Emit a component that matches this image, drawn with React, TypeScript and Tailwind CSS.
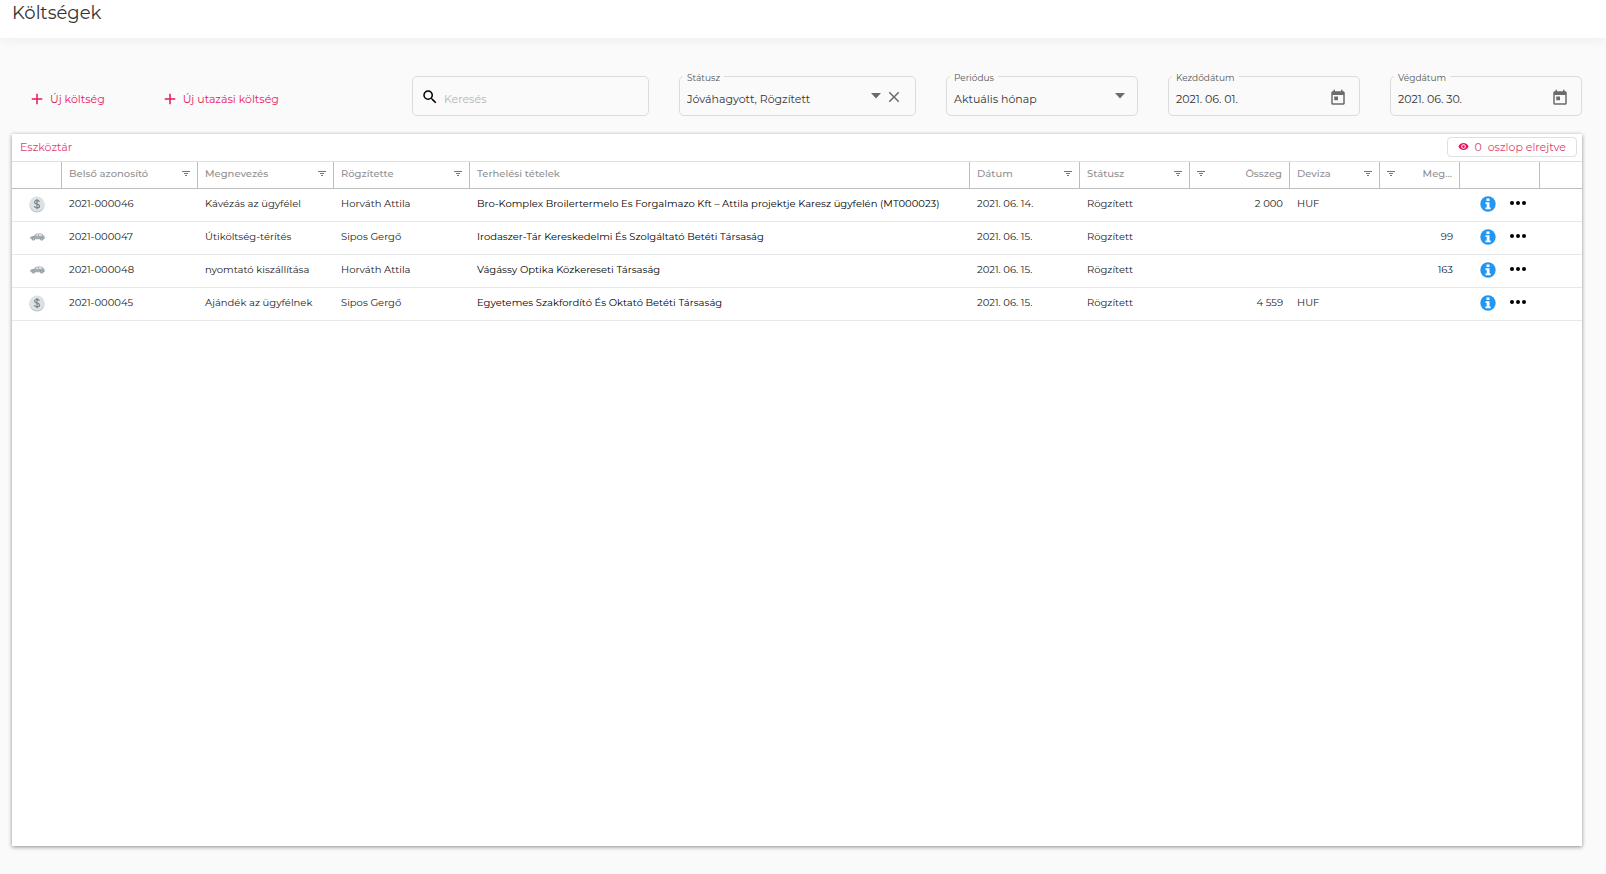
import { ReactNode } from "react";
import { MdAdd, MdClose, MdRemoveRedEye, MdSearch, MdToday } from "react-icons/md";

interface Expense {
  id: string;
  kind: "cash" | "travel";
  name: string;
  recordedBy: string;
  chargedTo: string;
  date: string;
  status: string;
  amount: string;
  currency: string;
  distance: string;
}

const expenses: Expense[] = [
  {
    id: "2021-000046",
    kind: "cash",
    name: "Kávézás az ügyfélel",
    recordedBy: "Horváth Attila",
    chargedTo: "Bro-Komplex Broilertermelo Es Forgalmazo Kft – Attila projektje Karesz ügyfelén (MT000023)",
    date: "2021. 06. 14.",
    status: "Rögzített",
    amount: "2 000",
    currency: "HUF",
    distance: "",
  },
  {
    id: "2021-000047",
    kind: "travel",
    name: "Útiköltség-térítés",
    recordedBy: "Sipos Gergő",
    chargedTo: "Irodaszer-Tár Kereskedelmi És Szolgáltató Betéti Társaság",
    date: "2021. 06. 15.",
    status: "Rögzített",
    amount: "",
    currency: "",
    distance: "99",
  },
  {
    id: "2021-000048",
    kind: "travel",
    name: "nyomtató kiszállítása",
    recordedBy: "Horváth Attila",
    chargedTo: "Vágássy Optika Közkereseti Társaság",
    date: "2021. 06. 15.",
    status: "Rögzített",
    amount: "",
    currency: "",
    distance: "163",
  },
  {
    id: "2021-000045",
    kind: "cash",
    name: "Ajándék az ügyfélnek",
    recordedBy: "Sipos Gergő",
    chargedTo: "Egyetemes Szakfordító És Oktató Betéti Társaság",
    date: "2021. 06. 15.",
    status: "Rögzített",
    amount: "4 559",
    currency: "HUF",
    distance: "",
  },
];

const FilterIcon = () => (
  <svg width="8" height="6" viewBox="0 0 8 6" fill="#757575" shapeRendering="crispEdges" aria-hidden="true">
    <rect x="0" y="0" width="8" height="1" />
    <rect x="2" y="2" width="4" height="1" />
    <rect x="3" y="4" width="2" height="1" />
  </svg>
);

const ArrowIcon = () => (
  <svg width="10" height="6" viewBox="0 0 10 6" fill="#6b6b6b" className="pointer-events-none shrink-0" aria-hidden="true">
    <path d="M0 0h10L5 5.500z" />
  </svg>
);

const InfoIcon = () => (
  <svg width="16" height="16" viewBox="0 0 16 16" aria-hidden="true">
    <circle cx="8" cy="8" r="7.700" fill="#2196f3" />
    <path d="M6.500 2.500h3v2.500h-3zM5.500 6.300h4v5.200h1.200v1.700H5.400v-1.700h1.300V8H5.500z" fill="#fff" />
  </svg>
);

const CoinIcon = () => (
  <svg width="16" height="17" viewBox="0 0 16 17" aria-hidden="true">
    <circle cx="8" cy="9" r="7.6" fill="#b9c1c5" />
    <circle cx="8" cy="8" r="7.6" fill="#dbe2e5" />
    <path
      d="M10.4 5.9C10.1 4.9 9.2 4.400 8 4.400c-1.400 0-2.400.7-2.400 1.800 0 2.500 5 1.200 5 3.800 0 1.200-1.100 1.900-2.600 1.900-1.400 0-2.400-.6-2.700-1.700M8 3v10.300"
      fill="none"
      stroke="#7b8489"
      strokeWidth="1.2"
    />
  </svg>
);

const CarIcon = () => (
  <svg width="15" height="8" viewBox="0 0 15 8" aria-hidden="true">
    <path
      d="M.3 5.800V4.200C.6 3.300 2 2.900 4 2.700 5.200 1.300 6.300.5 7.600.5h3.200c1.200 0 2 .8 2.800 2 .8.3 1.100 1 1.100 1.900v1.300l-1 .5H1z"
      fill="#a3acb1"
    />
    <path d="M5.300 2.700 7.300 1.300h.8v1.400zM8.900 1.300h1.700c.7 0 1.200.6 1.700 1.400H8.900z" fill="#eceff1" />
    <circle cx="3.400" cy="5.900" r="1.600" fill="#8b9499" />
    <circle cx="11.700" cy="5.900" r="1.600" fill="#8b9499" />
    <circle cx="3.400" cy="5.900" r=".7" fill="#dde1e3" />
    <circle cx="11.700" cy="5.900" r=".7" fill="#dde1e3" />
  </svg>
);

const DotsIcon = () => (
  <svg width="16" height="4" viewBox="0 0 16 4" fill="#000" aria-hidden="true">
    <circle cx="2" cy="2" r="2" />
    <circle cx="8" cy="2" r="2" />
    <circle cx="14" cy="2" r="2" />
  </svg>
);

interface FieldProps {
  id: string;
  label: string;
  children: ReactNode;
}

// Outlined field, the label sits on the top border
const Field = ({ id, label, children }: FieldProps) => (
  <div className="relative flex h-10 min-w-0 items-center rounded-[5px] border border-[#dcdcdc] pr-3 pl-[7px]">
    <label htmlFor={id} className="absolute -top-[5px] left-[3px] bg-[#fafafa] px-1 text-[9px] leading-3 text-[#555]">
      {label}
    </label>
    {children}
  </div>
);

interface HeadProps {
  title: string;
  filter?: boolean;
  right?: boolean;
}

const Head = ({ title, filter = true, right = false }: HeadProps) => (
  <th className="border-r border-b border-[#bdbdbd] px-[7px] font-medium">
    <div className={`flex items-center justify-between ${right ? "flex-row-reverse" : ""}`}>
      <span className="truncate">{title}</span>
      {filter && (
        <button type="button" aria-label={`${title} szűrése`} className="shrink-0">
          <FilterIcon />
        </button>
      )}
    </div>
  </th>
);

const App = () => {
  return (
    <div className="flex min-h-screen flex-col bg-[#fafafa] font-[Montserrat,Inter,sans-serif] text-[11px] leading-4 text-[#333]">
      <header className="h-[38px] bg-white pl-3 shadow-[0_2px_10px_rgba(0,0,0,0.05)]">
        <h1 className="text-[18px] leading-[26px] text-[#333]">Költségek</h1>
      </header>

      <main className="flex grow flex-col pt-[38px] pr-6 pb-7 pl-3">
        <div className="mb-[18px] grid grid-cols-[370fr_237fr_237fr_192fr_192fr_192fr] gap-[30px]">
          <div className="flex min-w-0 items-center gap-14 pt-[6px] pl-4 text-[#e6195a]">
            <button type="button" className="flex items-center gap-1">
              <MdAdd size={18} />
              Új költség
            </button>
            <button type="button" className="flex items-center gap-1">
              <MdAdd size={18} />
              Új utazási költség
            </button>
          </div>

          <div className="flex h-10 min-w-0 items-center gap-[5px] rounded-[5px] border border-[#dcdcdc] px-2 pt-[2px]">
            <MdSearch size={18} className="shrink-0 text-black" />
            <input
              type="search"
              aria-label="Keresés"
              placeholder="Keresés"
              className="w-full min-w-0 bg-transparent pt-1 outline-none placeholder:text-[#b5b5b5]"
            />
          </div>

          <Field id="status" label="Státusz">
            <select id="status" className="min-w-0 grow appearance-none bg-transparent pt-[6px] outline-none">
              <option>Jóváhagyott, Rögzített</option>
            </select>
            <ArrowIcon />
            <button type="button" aria-label="Törlés" className="ml-1 shrink-0 pt-[2px] text-[#6b6b6b]">
              <MdClose size={18} />
            </button>
          </Field>

          <Field id="period" label="Periódus">
            <select id="period" className="min-w-0 grow appearance-none bg-transparent pt-[6px] outline-none">
              <option>Aktuális hónap</option>
            </select>
            <ArrowIcon />
          </Field>

          <Field id="from" label="Kezdődátum">
            <input id="from" type="text" defaultValue="2021. 06. 01." className="min-w-0 grow bg-transparent pt-[6px] outline-none" />
            <button type="button" aria-label="Kezdődátum választása" className="shrink-0 pt-1 text-[#6b6b6b]">
              <MdToday size={18} />
            </button>
          </Field>

          <Field id="to" label="Végdátum">
            <input id="to" type="text" defaultValue="2021. 06. 30." className="min-w-0 grow bg-transparent pt-[6px] outline-none" />
            <button type="button" aria-label="Végdátum választása" className="shrink-0 pt-1 text-[#6b6b6b]">
              <MdToday size={18} />
            </button>
          </Field>
        </div>

        <section className="grow bg-white shadow-[0_1px_4px_rgba(0,0,0,0.45)]">
          <div className="flex h-7 items-center justify-between border-b border-[#e0e0e0] pr-[5px] pb-[2px] pl-2 text-[#e04069]">
            <button type="button">Eszköztár</button>
            <button type="button" className="flex h-5 items-center gap-[6px] rounded border border-[#e0e0e0] px-[10px]">
              <MdRemoveRedEye size={11} className="text-[#e6195a]" />
              <span>0&nbsp; oszlop elrejtve</span>
            </button>
          </div>

          <table className="w-full table-fixed border-separate border-spacing-0 text-left text-[10px]">
            <colgroup>
              <col className="w-[50px]" />
              <col className="w-[136px]" />
              <col className="w-[136px]" />
              <col className="w-[136px]" />
              <col className="w-[500px]" />
              <col className="w-[110px]" />
              <col className="w-[110px]" />
              <col className="w-[100px]" />
              <col className="w-[90px]" />
              <col className="w-[80px]" />
              <col className="w-[80px]" />
              <col />
            </colgroup>
            <thead>
              <tr className="h-[27px] text-[#919191] *:pb-[2px]">
                <th className="border-r border-b border-[#bdbdbd]" />
                <Head title="Belső azonosító" />
                <Head title="Megnevezés" />
                <Head title="Rögzítette" />
                <Head title="Terhelési tételek" filter={false} />
                <Head title="Dátum" />
                <Head title="Státusz" />
                <Head title="Összeg" right />
                <Head title="Deviza" />
                <Head title="Meg..." right />
                <th className="border-r border-b border-[#bdbdbd]" />
                <th className="border-b border-[#bdbdbd]" />
              </tr>
            </thead>
            <tbody>
              {expenses.map((e) => (
                <tr key={e.id} className="h-[33px] text-[#212121] *:border-b *:border-[#e8e8e8] *:pb-[2px]">
                  <td>
                    <div className="flex justify-center">{e.kind === "cash" ? <CoinIcon /> : <CarIcon />}</div>
                  </td>
                  <td className="px-[7px]">{e.id}</td>
                  <td className="truncate px-[7px]">{e.name}</td>
                  <td className="truncate px-[7px]">{e.recordedBy}</td>
                  <td className="truncate px-[7px] text-black">{e.chargedTo}</td>
                  <td className="px-[7px]">{e.date}</td>
                  <td className="px-[7px]">{e.status}</td>
                  <td className="px-[7px] text-right">{e.amount}</td>
                  <td className="px-[7px]">{e.currency}</td>
                  <td className="px-[7px] text-right">{e.distance}</td>
                  <td>
                    <div className="flex items-center gap-[14px] pl-5">
                      <button type="button" aria-label="Részletek">
                        <InfoIcon />
                      </button>
                      <button type="button" aria-label="Műveletek" className="pb-[2px]">
                        <DotsIcon />
                      </button>
                    </div>
                  </td>
                  <td />
                </tr>
              ))}
            </tbody>
          </table>
        </section>
      </main>
    </div>
  );
};

export default App;
